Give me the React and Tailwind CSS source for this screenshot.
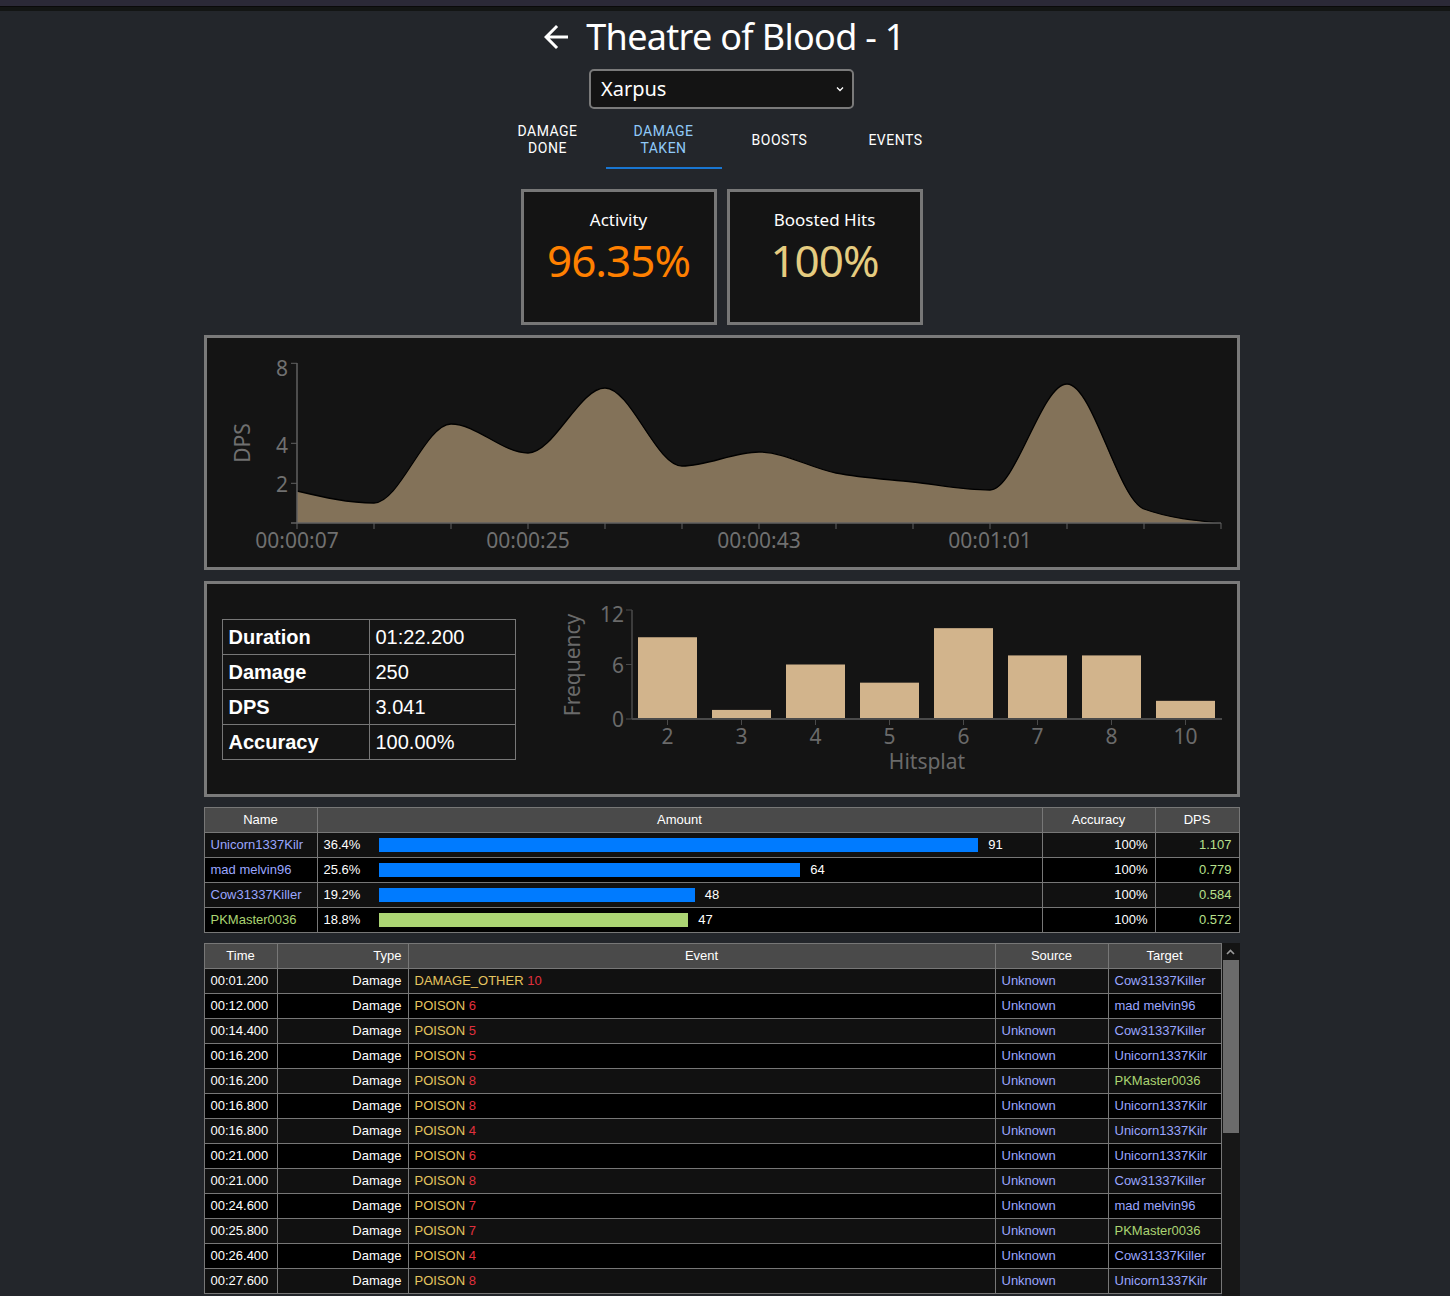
import React from "react";

const NAME_BLUE = "#9aa6ff";
const GREEN = "#abd473";

const players = [
  { name: "Unicorn1337Kilr", pct: "36.4%", amount: 91, acc: "100%", dps: "1.107" },
  { name: "mad melvin96", pct: "25.6%", amount: 64, acc: "100%", dps: "0.779" },
  { name: "Cow31337Killer", pct: "19.2%", amount: 48, acc: "100%", dps: "0.584" },
  { name: "PKMaster0036", pct: "18.8%", amount: 47, acc: "100%", dps: "0.572", me: true },
];

const events = [
  ["00:01.200", "DAMAGE_OTHER", 10, "Cow31337Killer"],
  ["00:12.000", "POISON", 6, "mad melvin96"],
  ["00:14.400", "POISON", 5, "Cow31337Killer"],
  ["00:16.200", "POISON", 5, "Unicorn1337Kilr"],
  ["00:16.200", "POISON", 8, "PKMaster0036"],
  ["00:16.800", "POISON", 8, "Unicorn1337Kilr"],
  ["00:16.800", "POISON", 4, "Unicorn1337Kilr"],
  ["00:21.000", "POISON", 6, "Unicorn1337Kilr"],
  ["00:21.000", "POISON", 8, "Cow31337Killer"],
  ["00:24.600", "POISON", 7, "mad melvin96"],
  ["00:25.800", "POISON", 7, "PKMaster0036"],
  ["00:26.400", "POISON", 4, "Cow31337Killer"],
  ["00:27.600", "POISON", 8, "Unicorn1337Kilr"],
];

const hist = [
  { k: "2", v: 9 },
  { k: "3", v: 1 },
  { k: "4", v: 6 },
  { k: "5", v: 4 },
  { k: "6", v: 10 },
  { k: "7", v: 7 },
  { k: "8", v: 7 },
  { k: "10", v: 2 },
];

// monotone-x curve through points, same idea as d3.curveMonotoneX
const monotonePath = (pts) => {
  const n = pts.length;
  const h = [], s = [];
  for (let i = 0; i < n - 1; i++) {
    h[i] = pts[i + 1][0] - pts[i][0];
    s[i] = (pts[i + 1][1] - pts[i][1]) / h[i];
  }
  const t = [];
  for (let i = 1; i < n - 1; i++) {
    const p = (s[i - 1] * h[i] + s[i] * h[i - 1]) / (h[i - 1] + h[i]);
    t[i] = (Math.sign(s[i - 1]) + Math.sign(s[i])) * Math.min(Math.abs(s[i - 1]), Math.abs(s[i]), 0.5 * Math.abs(p)) || 0;
  }
  t[0] = (3 * s[0] - t[1]) / 2;
  t[n - 1] = (3 * s[n - 2] - t[n - 2]) / 2;
  let d = `M${pts[0][0]},${pts[0][1]}`;
  for (let i = 0; i < n - 1; i++) {
    const [x0, y0] = pts[i];
    const [x1, y1] = pts[i + 1];
    const dx = h[i] / 3;
    d += ` C${x0 + dx},${y0 + t[i] * dx} ${x1 - dx},${y1 - t[i + 1] * dx} ${x1},${y1}`;
  }
  return d;
};

const dpsPoints = [153, 165, 86, 115, 50, 128, 114, 135, 144, 152, 46, 171, 185].map((y, i) => [90 + 77 * i, y]);

const DpsChart = () => {
  const line = monotonePath(dpsPoints);
  const area = `${line} L1014,185 L90,185 Z`;
  const yTicks = [
    { v: "8", y: 25.3, ly: 38 },
    { v: "4", y: 105.3, ly: 115 },
    { v: "2", y: 145.3, ly: 154 },
  ];
  const xLabels = [
    { t: "00:00:07", x: 90 },
    { t: "00:00:25", x: 321 },
    { t: "00:00:43", x: 552 },
    { t: "00:01:01", x: 783 },
  ];
  return (
    <svg width="1030" height="229" fontFamily="'Noto Sans', sans-serif">
      <path d={area} fill="#837259" />
      <path d={line} fill="none" stroke="#000" strokeWidth="1.3" />
      <line x1="90" y1="25" x2="90" y2="185" stroke="#606060" strokeWidth="1.5" />
      <line x1="84" y1="185" x2="1014" y2="185" stroke="#606060" strokeWidth="1.5" />
      {yTicks.map((t) => (
        <g key={t.v}>
          <line x1="84" y1={t.y} x2="90" y2={t.y} stroke="#606060" />
          <text x="81" y={t.ly} textAnchor="end" fontSize="21" fill="#707070">{t.v}</text>
        </g>
      ))}
      {Array.from({ length: 13 }).map((_, i) => (
        <line key={i} x1={90 + 77 * i} y1="185" x2={90 + 77 * i} y2="191" stroke="#606060" />
      ))}
      {xLabels.map((l) => (
        <text key={l.t} x={l.x} y="210" textAnchor="middle" fontSize="21" fill="#707070">{l.t}</text>
      ))}
      <text transform="translate(43,105) rotate(-90)" textAnchor="middle" fontSize="21" fill="#707070">DPS</text>
    </svg>
  );
};

const Histogram = () => {
  const unit = 109 / 12;
  return (
    <svg width="690" height="210" fontFamily="'Noto Sans', sans-serif">
      {hist.map((b, i) => (
        <rect key={b.k} x={98 + 74 * i} y={135 - b.v * unit} width="59" height={b.v * unit} fill="#d2b48c" />
      ))}
      <line x1="92" y1="26" x2="92" y2="135" stroke="#4a4a4a" strokeWidth="1.5" />
      <line x1="92" y1="135" x2="682" y2="135" stroke="#4a4a4a" strokeWidth="2" />
      {[{ v: "12", y: 26, ly: 38 }, { v: "6", y: 80.5, ly: 89 }, { v: "0", y: 135, ly: 143 }].map((t) => (
        <g key={t.v}>
          <line x1="86" y1={t.y} x2="92" y2={t.y} stroke="#4a4a4a" />
          <text x="84" y={t.ly} textAnchor="end" fontSize="21" fill="#6a6a6a">{t.v}</text>
        </g>
      ))}
      {hist.map((b, i) => (
        <g key={b.k}>
          <line x1={127.5 + 74 * i} y1="135" x2={127.5 + 74 * i} y2="141" stroke="#4a4a4a" />
          <text x={127.5 + 74 * i} y="160" textAnchor="middle" fontSize="21" fill="#6a6a6a">{b.k}</text>
        </g>
      ))}
      <text x="387" y="185" textAnchor="middle" fontSize="21" fill="#6a6a6a">Hitsplat</text>
      <text transform="translate(40,81) rotate(-90)" textAnchor="middle" fontSize="21" fill="#6a6a6a">Frequency</text>
    </svg>
  );
};

const StatCard = ({ title, value, color }) => (
  <div className="w-[196px] h-[136px] border-[3px] border-[#777] bg-[#141414] flex flex-col items-center pt-[16px]">
    <div className="text-[17px] leading-[24px] text-white">{title}</div>
    <div className={`text-[44px] leading-[56px] tracking-[-1px] ${color}`}>{value}</div>
  </div>
);

const tabs = [
  { label: ["DAMAGE", "DONE"] },
  { label: ["DAMAGE", "TAKEN"], active: true },
  { label: ["BOOSTS"] },
  { label: ["EVENTS"] },
];

export default function App() {
  return (
    <div className="w-[1450px] h-[1296px] overflow-hidden bg-[#23262b] font-['Noto_Sans',sans-serif]">
      <div className="h-[6px] bg-[#2b2937]" />
      <div className="h-[5px] bg-[#131514] border-t border-[#0a0a0a]" />
      <div className="w-[1443px] flex flex-col items-center">
        {/* title */}
        <div className="flex items-center gap-[12px] h-[46px] mt-[3px]">
          <svg width="36" height="36" viewBox="0 0 24 24" fill="#fff">
            <path d="M20 11H7.83l5.59-5.59L12 4l-8 8 8 8 1.41-1.41L7.83 13H20v-2z" />
          </svg>
          <h1 className="text-[36px] leading-[46px] tracking-[-0.7px] text-white">Theatre of Blood - 1</h1>
        </div>

        <div className="mt-[9px] w-[265px] h-[40px] border-2 border-[#7a7a7a] rounded-[5px] bg-[#141414] flex items-center justify-between pl-[10px] pr-[8px]">
          <span className="text-[20px] text-white">Xarpus</span>
          <svg width="8" height="6" viewBox="0 0 8 6">
            <path d="M1 1.5l3 3 3-3" fill="none" stroke="#fff" strokeWidth="1.3" />
          </svg>
        </div>

        {/* tabs */}
        <div className="flex mt-[2px] font-['Roboto',sans-serif]">
          {tabs.map((t) => (
            <div
              key={t.label.join(" ")}
              className={`w-[116px] h-[58px] flex flex-col items-center justify-center text-[14px] font-normal leading-[17px] tracking-[0.5px] ${
                t.active ? "text-[#90caf9] border-b-2 border-[#1976d2] pt-[2px]" : "text-white"
              }`}
            >
              {t.label.map((l) => (
                <span key={l}>{l}</span>
              ))}
            </div>
          ))}
        </div>

        <div className="flex gap-[10px] mt-[20px]">
          <StatCard title="Activity" value="96.35%" color="text-[#ff8000]" />
          <StatCard title="Boosted Hits" value="100%" color="text-[#e5cc80]" />
        </div>

        <div className="mt-[10px] w-[1036px] h-[235px] border-[3px] border-[#7a7a7a] bg-[#141414]">
          <DpsChart />
        </div>

        <div className="mt-[11px] w-[1036px] h-[216px] border-[3px] border-[#7a7a7a] bg-[#141414] flex items-center pl-[15px]">
          <table className="border-collapse w-[294px] table-fixed font-['Liberation_Sans',Arial,sans-serif] text-[20px] text-white">
            <tbody>
              {[
                ["Duration", "01:22.200"],
                ["Damage", "250"],
                ["DPS", "3.041"],
                ["Accuracy", "100.00%"],
              ].map(([k, v]) => (
                <tr key={k} className="h-[35px]">
                  <td className="border border-[#777] px-[6px] font-bold w-[147px]">{k}</td>
                  <td className="border border-[#777] px-[6px]">{v}</td>
                </tr>
              ))}
            </tbody>
          </table>
          <div className="ml-[24px]">
            <Histogram />
          </div>
        </div>

        {/* players */}
        <table className="mt-[10px] w-[1036px] table-fixed border-collapse font-['Liberation_Sans',Arial,sans-serif] text-[13px] text-white">
          <thead>
            <tr className="h-[25px] bg-[#4a4a4a]">
              <th className="w-[113px] border border-[#777] font-normal">Name</th>
              <th className="border border-[#777] font-normal">Amount</th>
              <th className="w-[113px] border border-[#777] font-normal">Accuracy</th>
              <th className="w-[84px] border border-[#777] font-normal">DPS</th>
            </tr>
          </thead>
          <tbody>
            {players.map((p, i) => (
              <tr key={p.name} className={`h-[25px] ${i % 2 === 0 ? "bg-[#111]" : "bg-black"}`}>
                <td className="border border-[#777] px-[6px] whitespace-nowrap" style={{ color: p.me ? GREEN : NAME_BLUE }}>{p.name}</td>
                <td className="border border-[#777] px-[6px]">
                  <div className="flex items-center">
                    <span className="w-[55px]">{p.pct}</span>
                    <div
                      className={`h-[14px] ${p.me ? "bg-[#abd473]" : "bg-[#007bff]"}`}
                      style={{ width: `${p.amount * 6.59}px` }}
                    />
                    <span className="ml-[10px]">{p.amount}</span>
                  </div>
                </td>
                <td className="border border-[#777] px-[7px] text-right">{p.acc}</td>
                <td className="border border-[#777] px-[7px] text-right text-[#b8e08c]">{p.dps}</td>
              </tr>
            ))}
          </tbody>
        </table>

        {/* events */}
        <div className="mt-[10px] w-[1036px] h-[353px] overflow-hidden flex">
          <table className="w-[1018px] h-fit table-fixed border-collapse font-['Liberation_Sans',Arial,sans-serif] text-[13px] text-white">
            <thead>
              <tr className="h-[25px] bg-[#4a4a4a]">
                <th className="w-[73px] border border-[#777] font-normal">Time</th>
                <th className="w-[131px] border border-[#777] font-normal text-right px-[6px]">Type</th>
                <th className="border border-[#777] font-normal">Event</th>
                <th className="w-[113px] border border-[#777] font-normal">Source</th>
                <th className="w-[113px] border border-[#777] font-normal">Target</th>
              </tr>
            </thead>
            <tbody>
              {events.map(([time, name, amt, target], i) => (
                <tr key={i} className={`h-[25px] ${i % 2 === 0 ? "bg-[#111]" : "bg-black"}`}>
                  <td className="border border-[#777] px-[6px]">{time}</td>
                  <td className="border border-[#777] px-[6px] text-right">Damage</td>
                  <td className="border border-[#777] px-[6px]">
                    <span className="text-[#e5c560]">{name}</span> <span className="text-[#e0303d]">{amt}</span>
                  </td>
                  <td className="border border-[#777] px-[6px] text-[#9aa6ff]">Unknown</td>
                  <td className="border border-[#777] px-[6px] whitespace-nowrap" style={{ color: target === "PKMaster0036" ? GREEN : NAME_BLUE }}>
                    {target}
                  </td>
                </tr>
              ))}
            </tbody>
          </table>
          <div className="w-[18px] flex flex-col bg-[#171717]">
            <div className="h-[17px] bg-[#141414] flex items-center justify-center">
              <svg width="9" height="6" viewBox="0 0 9 6">
                <path d="M1 5l3.5-3.5L8 5" fill="none" stroke="#9a9a9a" strokeWidth="1.6" />
              </svg>
            </div>
            <div className="h-[173px] mx-[1px] bg-[#6b6b6b]" />
          </div>
        </div>
      </div>
    </div>
  );
}
